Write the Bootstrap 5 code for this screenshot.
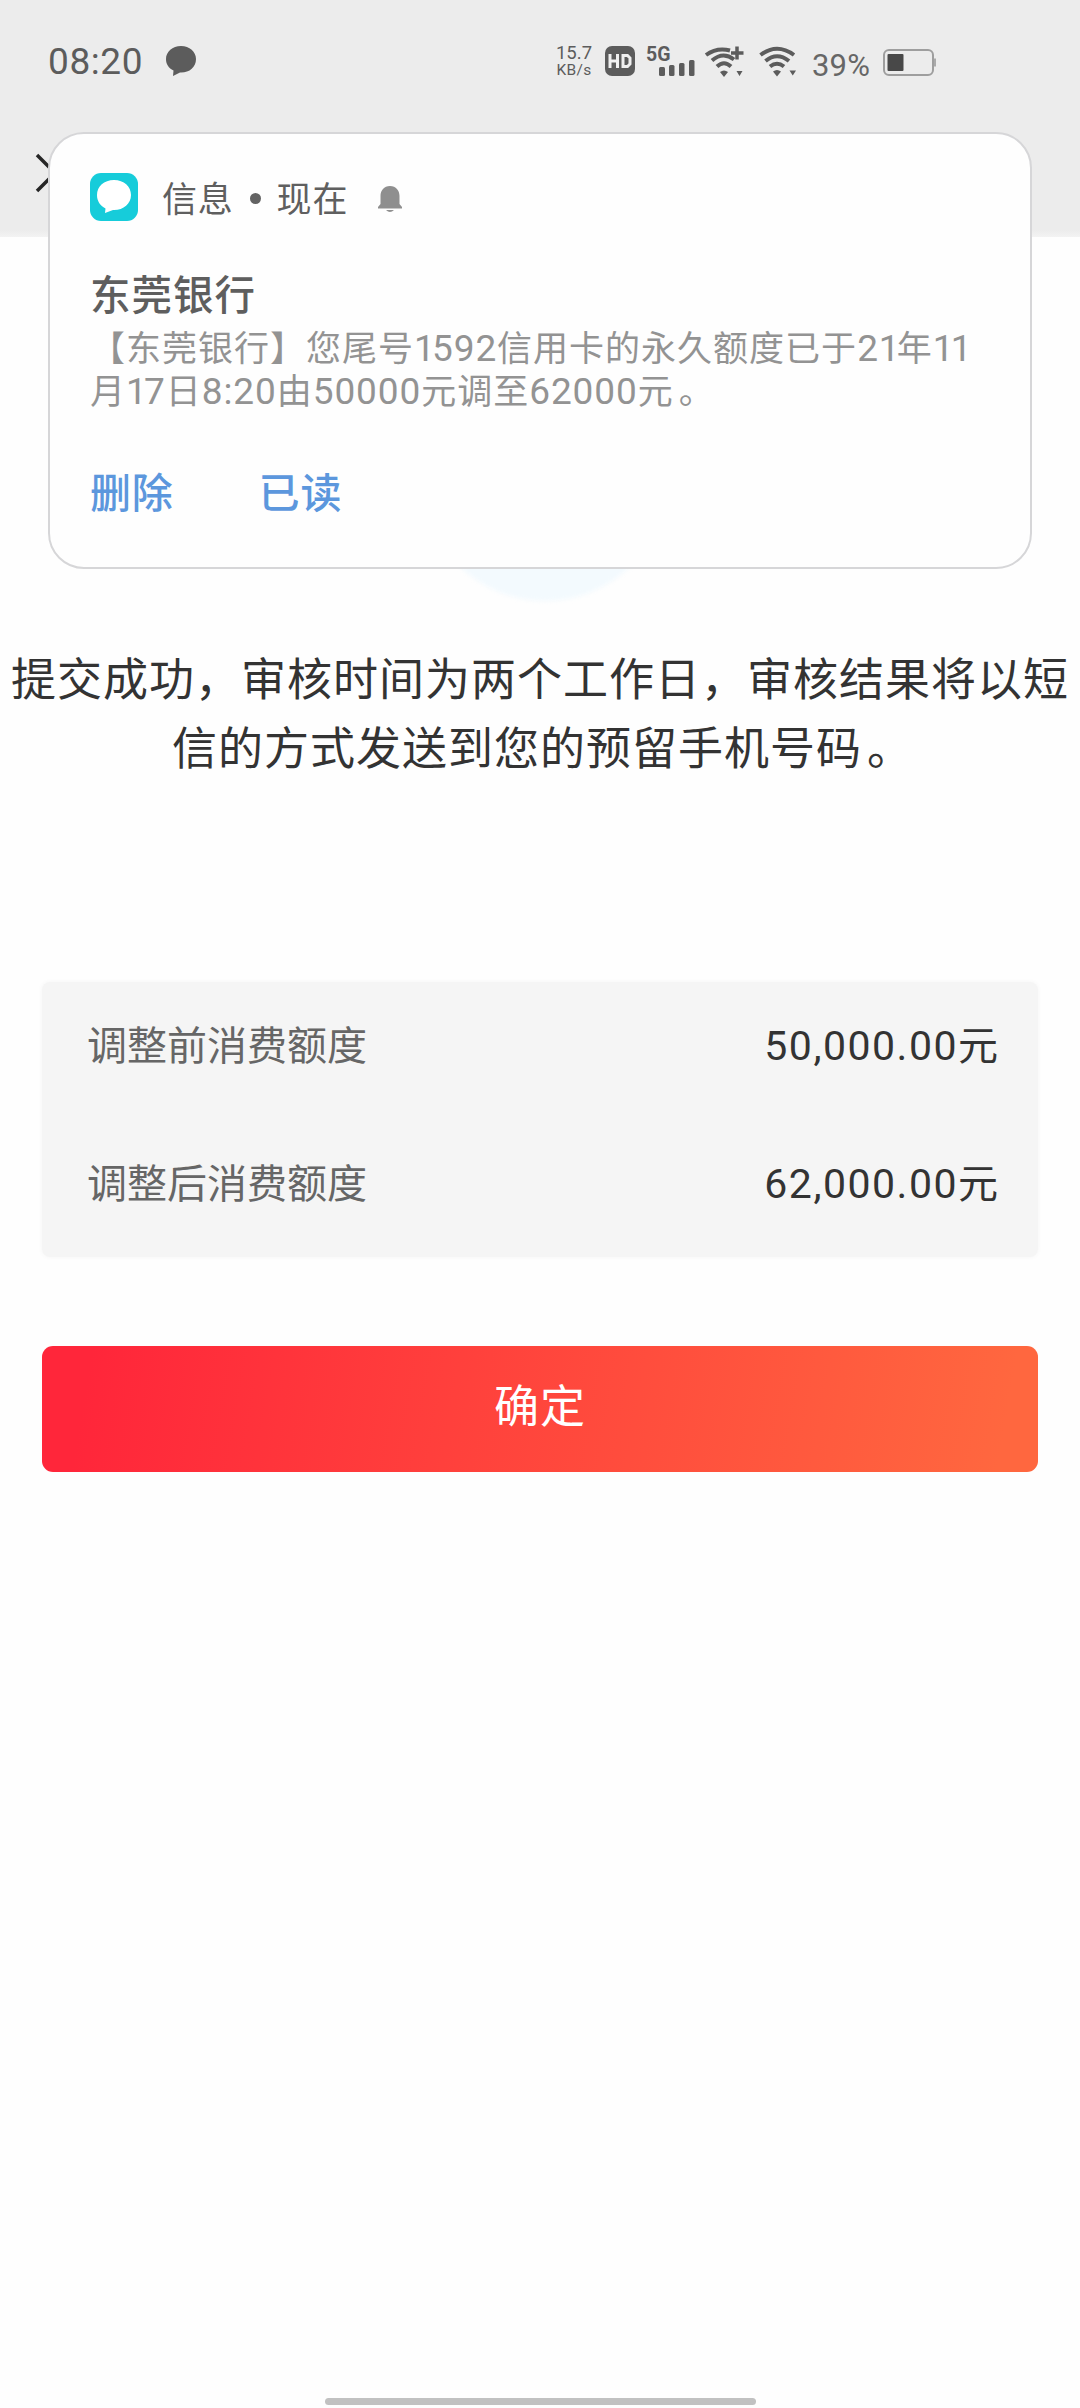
<!DOCTYPE html>
<html lang="zh-CN">
<head>
<meta charset="utf-8">
<meta name="viewport" content="width=device-width, initial-scale=1">
<title>额度调整</title>
<link href="https://cdn.jsdelivr.net/npm/bootstrap@5.3.0/dist/css/bootstrap.min.css" rel="stylesheet">
<style>
html{overflow:hidden}
body{font-family:Roboto,"Noto Sans CJK SC",sans-serif;background:#fefefe;color:#333;overflow:hidden}
svg{display:block;flex:none;overflow:visible}
.screen{width:1080px;height:2408px}
.topbar{height:237px;background:linear-gradient(#ececec 230px,#f3f3f3);color:#5c5c5c}
.status{height:100px;padding:46px 0 0 49px}
.clock{font-size:37px;line-height:32px;letter-spacing:.6px;width:117px;margin-left:-1px;margin-right:1px}
.rate{width:48px;margin-left:354px;margin-right:7px;line-height:15px;font-size:18.5px}
.rate small{font-size:15.5px;line-height:19px;letter-spacing:.3px}
.pct{font-size:31px;line-height:38px;font-weight:400;letter-spacing:.2px;margin:1px 0 0 15px;width:74px;color:#666}
.close-x{margin:50px 0 0 34px}
.notice{left:48px;top:132px;width:984px;height:437px;border:2px solid #d6d6d8;border-radius:36px;background:#fefefe;padding:39px 40px 0 40px;z-index:2}
.app-name{font-size:35px;line-height:44px;padding-top:4px;letter-spacing:.8px;color:#5f5f5f;height:48px}
.app-name span{display:block;margin-top:2px}
.dot{width:11px;height:11px;background:#636363;margin:3px 16px 0 16px}
.sender{font-size:40.5px;line-height:50px;letter-spacing:1px;font-weight:500;color:#5e5e5e;margin-top:50px}
.message{font-size:35px;line-height:43px;letter-spacing:1px;color:#939393;margin-top:7px}
.message b{font-weight:400;font-size:37px;letter-spacing:.9px;line-height:1}
.message i{font-style:normal;letter-spacing:-2.8px}
.stop{margin:0 -5px 0 5px}
.act{font-size:41px;line-height:54px;letter-spacing:.8px;font-weight:500;color:#5c97dd;text-decoration:none}
.glow{left:422px;top:355px;width:246px;height:246px;background:#f3fafe;z-index:1;filter:blur(2px)}
.result{padding-top:409px;font-size:45px;letter-spacing:1px;line-height:69px}
.limits{margin:198px 42px 0;height:275px;background:#f5f5f5;border-radius:8px;box-shadow:0 0 5px #f5f5f5;padding:0 40px 0 45px}
.limits>div{height:138px;font-size:40px;padding-bottom:8px}
.limits .name{color:#666}
.limits .sum{letter-spacing:1.5px;font-size:41px}
.limits .sum span{font-size:40px;letter-spacing:0}
.ok{margin:89px 42px 0;width:996px;height:126px;border:0;border-radius:11px;background:linear-gradient(100deg,#ff263a 5%,#ff673f 96%);color:#fff;font-size:45px;letter-spacing:1px;padding:0 0 2px}
.homebar{width:431px;height:7px;background:#c1c1c1;margin:auto auto 3px 325px}
</style>
</head>
<body>
<main class="screen d-flex flex-column position-relative">
  <header class="topbar">
    <div class="status d-flex align-items-start">
      <div class="clock">08:20</div>
      <svg width="30" height="30" viewBox="0 0 30 30"><path fill="#5c5c5c" d="M15 0C6.500 0 0 5.700 0 13c0 5.200 2.600 9 7.500 11.500L7 30l7-3.500c9 .500 16-5 16-13.500C30 5.700 23.500 0 15 0Z"/></svg>
      <div class="rate text-center"><div>15.7</div><small class="d-block">KB/s</small></div>
      <svg width="30" height="30" viewBox="0 0 30 30"><rect width="30" height="30" rx="7" fill="#5c5c5c"/><path d="M5 8v14M12.500 8v14M5 15h7.500M18 9.500v11h4.500l2.500-2.500v-6l-2.500-2.500Z" fill="none" stroke="#f0f0f0" stroke-width="3"/></svg>
      <svg width="52" height="32" viewBox="0 0 52 32" style="margin-left:10px" fill="#5c5c5c"><text x="1" y="14.500" font-family="Roboto" font-weight="700" font-size="19.500">5G</text><rect x="14" y="21" width="6" height="9" rx="1.500"/><rect x="24" y="19" width="5.500" height="11" rx="1.500"/><rect x="34" y="17" width="5.500" height="13" rx="1.500"/><rect x="44" y="14" width="5.500" height="16" rx="1.500"/></svg>
      <svg width="40" height="32" viewBox="0 0 40 32" style="margin-left:9px"><g fill="none" stroke="#5c5c5c" stroke-width="4"><path d="M0 9Q11 1 24 4.500M6 14.500Q17 5 28 13.500M11 20.500Q18 14 25 20.500"/><path d="M31 .500v13M25 7h12.500" stroke-width="3.500"/></g><path d="M14 26q4-3 8 0l-4 5ZM30.500 25h6l-3 5Z" fill="#5c5c5c"/></svg>
      <svg width="38" height="32" viewBox="0 0 38 32" style="margin-left:13px"><path d="M1.500 9Q18 -3.500 35 9M6.500 15Q18 5.500 30 15M11 20.500Q18 15 25 20.500" fill="none" stroke="#5c5c5c" stroke-width="4"/><path d="M14 25.500q4-3 8 0l-4 5ZM30.500 24.500h6.500l-3.250 5Z" fill="#5c5c5c"/></svg>
      <div class="pct">39%</div>
      <svg width="55" height="32" viewBox="0 0 55 32" style="margin-left:-3px"><rect x="1" y="4" width="49" height="25" rx="5" fill="none" stroke="#9e9e9e" stroke-width="2"/><path d="M52 12.500v8" stroke="#aaa" stroke-width="2"/><rect x="4.500" y="8" width="16" height="17" rx="1" fill="#484848"/></svg>
    </div>
    <svg class="close-x" width="44" height="44" viewBox="0 0 44 44"><path d="m3 5 36 36M3 41 39 5" stroke="#262626" stroke-width="3.500"/></svg>
  </header>

  <div class="glow position-absolute rounded-circle"></div>

  <section class="notice position-absolute">
    <div class="d-flex align-items-center">
      <svg width="48" height="48" viewBox="0 0 48 48"><rect width="48" height="48" rx="11" fill="#16ccda"/><path fill="#fff" d="M24 7C14 7 7 13.500 7 22c0 6 3 10.500 8.500 13.500L15 40l8-3c10 .500 18-6 18-15C41 13.500 34 7 24 7Z"/></svg>
      <div class="app-name" style="margin-left:24px"><span>信息</span></div><div class="dot rounded-circle"></div><div class="app-name"><span>现在</span></div>
      <svg width="24" height="27" viewBox="0 0 24 27" style="margin:4px 0 0 30px" fill="#8f8f8f"><path d="M12 0C6 0 2.500 4.500 2.500 10v8L0 21v1.500h24V21l-2.500-3v-8C21.500 4.500 18 0 12 0ZM8 24h8q-4 4-8 0Z"/></svg>
    </div>
    <div class="sender">东莞银行</div>
    <div class="message text-nowrap">【东莞银行】您尾号<b><i>1</i>592</b>信用卡的永久额度已于<b>2<i>1</i></b>年<b><i>11</i></b><br>月<b><i>1</i>7</b>日<b>8:20</b>由<b>50000</b>元调至<b>62000</b>元<span class="stop">。</span></div>
    <div class="d-flex" style="margin-top:53px;gap:85px"><a class="act" href="#">删除</a><a class="act" href="#">已读</a></div>
  </section>

  <div class="result text-center text-nowrap">提交成功，审核时间为两个工作日，审核结果将以短<br>信的方式发送到您的预留手机号码<span class="stop">。</span></div>

  <section class="limits">
    <div class="d-flex justify-content-between align-items-center"><span class="name">调整前消费额度</span><span class="sum">50,000.00<span>元</span></span></div>
    <div class="d-flex justify-content-between align-items-center"><span class="name">调整后消费额度</span><span class="sum">62,000.00<span>元</span></span></div>
  </section>

  <button class="btn ok" type="button">确定</button>
  <div class="homebar rounded-pill"></div>
</main>
<script src="https://cdn.jsdelivr.net/npm/bootstrap@5.3.0/dist/js/bootstrap.bundle.min.js"></script>
</body>
</html>
